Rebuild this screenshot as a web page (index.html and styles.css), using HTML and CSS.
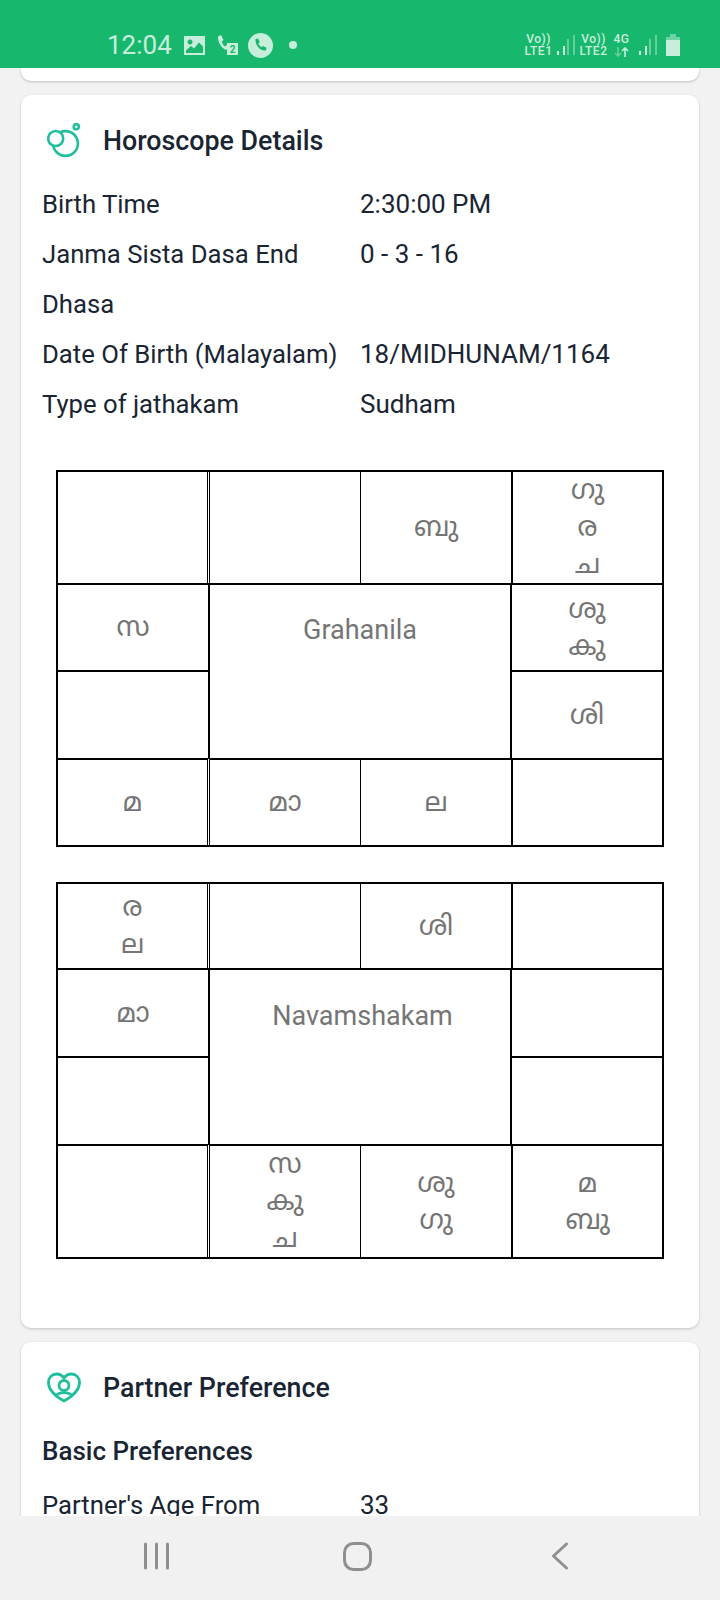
FILE: index.html
```html
<!DOCTYPE html>
<html lang="en">

<head>
    <meta charset="UTF-8">
    <meta name="viewport" content="width=device-width, initial-scale=1.0">
    <title>Horoscope Details</title>
    <link rel="stylesheet" href="styles.css">
</head>

<body>
    <div class="status-bar">
        <div class="status-left">
            <span class="clock">12:04</span>
            <svg class="icon-gallery" width="21" height="19" viewBox="0 0 21 19"><path fill="#c6eeda" fill-rule="evenodd" d="M0 0h21v19H0zM6 3.500a2.500 2.500 0 1 0 .01 0zM2 17h17v-6.500l-4-4-5 6-3-2.500-5 4.500z"/></svg>
            <svg class="icon-call" width="21" height="20" viewBox="0 0 21 20"><path fill="#c6eeda" d="M1 1.500 4 0l2.500 5-1.700 1.500c.5 2 1.700 4 3.200 5l2-1.500 1 3-2 2C4 13 .8 7 1 1.500z"/><rect x="10" y="8" width="11" height="12" fill="#c6eeda"/><text class="badge-num" x="15.500" y="18" text-anchor="middle">2</text></svg>
            <svg class="icon-whatsapp" width="25" height="25" viewBox="0 0 25 25"><circle cx="12.500" cy="12.500" r="12.500" fill="#c6eeda"/><path fill="#18b76e" d="M7.500 6 10 5.500l1.800 3.800-1.500 1.300c.6 1.500 1.800 2.800 3.300 3.700l1.400-1.400 3.500 1.900-.7 2.700C12 18.200 7.200 12.500 7.500 6z"/></svg>
            <span class="dot"></span>
        </div>
        <div class="status-right">
            <div class="net net-one"><span>Vo))</span><span>LTE1</span></div>
            <svg class="signal-one" width="18" height="20" viewBox="0 0 18 20"><path fill="#c6eeda" d="M0 16h2v4H0zM6 11h2v9H6z"/><path fill="#c6eeda" opacity=".45" d="M10 4h2v16h-2zM16 0h2v20h-2z"/></svg>
            <div class="net net-two"><span>Vo))</span><span>LTE2</span></div>
            <div class="net net-4g">
                <span>4G</span>
                <svg width="15" height="10" viewBox="0 0 15 10" fill="none" stroke="#c6eeda" stroke-width="1.600"><path opacity=".45" d="M4 0v9M1 6l3 3 3-3"/><path d="M11 10V1M8 4l3-3 3 3"/></svg>
            </div>
            <svg class="signal-two" width="18" height="20" viewBox="0 0 18 20"><path fill="#c6eeda" d="M0 16h2v4H0zM6 11h2v9H6z"/><path fill="#c6eeda" opacity=".45" d="M10 4h2v16h-2zM16 0h2v20h-2z"/></svg>
            <svg class="battery" width="14" height="22" viewBox="0 0 14 22"><path fill="#c6eeda" opacity=".5" d="M4 0h6v3h4v5H0V3h4z"/><path fill="#c6eeda" d="M0 6h14v16H0z"/></svg>
        </div>
    </div>

    <div class="content">
        <div class="card card-prev"></div>

        <div class="card card-horoscope">
            <div class="card-title">
                <svg class="title-icon" width="34" height="36" viewBox="0 0 34 36" fill="none" stroke="#20bf9c" stroke-width="2.600">
                    <circle cx="18.500" cy="20.500" r="12.400"/>
                    <circle cx="8.700" cy="15.500" r="7.500" fill="#fff"/>
                    <circle cx="29.300" cy="3.700" r="2.600"/>
                </svg>
                <h2>Horoscope Details</h2>
            </div>
            <div class="detail-row"><span class="detail-label">Birth Time</span><span class="detail-value">2:30:00 PM</span></div>
            <div class="detail-row"><span class="detail-label">Janma Sista Dasa End</span><span class="detail-value">0 - 3 - 16</span></div>
            <div class="detail-row"><span class="detail-label">Dhasa</span></div>
            <div class="detail-row"><span class="detail-label">Date Of Birth (Malayalam)</span><span class="detail-value">18/MIDHUNAM/1164</span></div>
            <div class="detail-row"><span class="detail-label">Type of jathakam</span><span class="detail-value">Sudham</span></div>

            <table class="chart chart-first">
                <tr class="row-a">
                    <td class="c1"></td>
                    <td class="c2"></td>
                    <td class="c3">ബു</td>
                    <td class="c4">ഗു<br>ര<br>ച</td>
                </tr>
                <tr class="row-b">
                    <td class="mid-left">സ</td>
                    <td class="center" colspan="2" rowspan="2"><div class="center-label">Grahanila</div></td>
                    <td>ശു<br>കു</td>
                </tr>
                <tr class="row-c">
                    <td class="mid-left"></td>
                    <td>ശി</td>
                </tr>
                <tr class="row-b">
                    <td class="c1">മ</td>
                    <td class="c2">മാ</td>
                    <td class="c3">ല</td>
                    <td class="c4"></td>
                </tr>
            </table>

            <table class="chart">
                <tr class="row-d">
                    <td class="c1">ര<br>ല</td>
                    <td class="c2"></td>
                    <td class="c3">ശി</td>
                    <td class="c4"></td>
                </tr>
                <tr class="row-c">
                    <td class="mid-left">മാ</td>
                    <td class="center" colspan="2" rowspan="2"><div class="center-label center-label-wide">Navamshakam</div></td>
                    <td></td>
                </tr>
                <tr class="row-c">
                    <td class="mid-left"></td>
                    <td></td>
                </tr>
                <tr class="row-e">
                    <td class="c1"></td>
                    <td class="c2">സ<br>കു<br>ച</td>
                    <td class="c3">ശു<br>ഗു</td>
                    <td class="c4">മ<br>ബു</td>
                </tr>
            </table>
        </div>

        <div class="card card-partner">
            <div class="card-title">
                <svg class="title-icon" width="34" height="36" viewBox="0 0 34 36" fill="none" stroke="#20bf9c" stroke-width="2.800">
                    <path d="M17 31C7 25.500 1.500 20 1.500 12.500 1.500 7.500 5 4 9.500 4c3 0 5.800 1.500 7.500 4 1.700-2.500 4.500-4 7.500-4C29 4 32.500 7.500 32.500 12.500 32.500 20 27 25.500 17 31z"/>
                    <circle cx="17" cy="15.500" r="5"/>
                    <path d="M8 26.500c2.500-2.800 5.500-3.800 9-3.800s6.500 1 9 3.800"/>
                </svg>
                <h2>Partner Preference</h2>
            </div>
            <h3>Basic Preferences</h3>
            <div class="detail-row"><span class="detail-label">Partner's Age From</span><span class="detail-value">33</span></div>
        </div>
    </div>

    <div class="nav-bar">
        <svg class="nav-recent" width="25" height="28" viewBox="0 0 25 28" fill="none" stroke="#8f8f8f" stroke-width="3" stroke-linecap="round"><path d="M1.500 2v24M12.500 2v24M23.500 2v24"/></svg>
        <svg class="nav-home" width="29" height="29" viewBox="0 0 29 29" fill="none" stroke="#8f8f8f" stroke-width="3"><rect x="1.500" y="1.500" width="26" height="26" rx="9"/></svg>
        <svg class="nav-back" width="16" height="28" viewBox="0 0 16 28" fill="none" stroke="#8f8f8f" stroke-width="3" stroke-linecap="round" stroke-linejoin="round"><path d="M14.500 2 1.500 14l13 12"/></svg>
    </div>
</body>

</html>
```

FILE: styles.css
```css
/* Page */
html,
body {
    margin: 0;
    padding: 0;
}

body {
    width: 720px;
    height: 1600px;
    overflow: hidden;
    display: flex;
    flex-direction: column;
    background-color: #f2f2f2;
    font-family: Roboto, "Noto Sans", "Noto Sans Malayalam", sans-serif;
    color: #1a2533;
}

/* Status bar */
.status-bar {
    height: 68px;
    flex: none;
    box-sizing: border-box;
    padding: 22px 40px 0 107px;
    display: flex;
    justify-content: space-between;
    align-items: center;
    background-color: #18b76e;
    color: #c6eeda;
}

.status-left,
.status-right {
    display: flex;
    align-items: center;
}

.clock {
    font-size: 26px;
    margin-right: 12px;
}

.icon-call {
    margin-left: 12px;
}

.badge-num {
    font-size: 10px;
    font-weight: 700;
    fill: #18b76e;
}

.icon-whatsapp {
    margin-left: 10px;
}

.dot {
    width: 8px;
    height: 8px;
    margin-left: 16px;
    border-radius: 50%;
    background-color: #c6eeda;
}

.net {
    display: flex;
    flex-direction: column;
    align-items: center;
    font-size: 12px;
    font-weight: 500;
    line-height: 12px;
    letter-spacing: 0.5px;
}

.net-one,
.net-two {
    width: 27px;
}

.signal-one,
.net-two {
    margin-left: 5px;
}

.net-4g {
    width: 15px;
    gap: 2px;
    margin-left: 7px;
}

.signal-two {
    margin-left: 10px;
}

.battery {
    margin-left: 9px;
}

/* Cards */
.content {
    flex: 1;
    overflow: hidden;
    min-height: 0;
}

.card {
    margin: 0 21px 14px;
    background-color: #fff;
    border-radius: 10px;
    box-shadow: 0 1px 3px rgba(0, 0, 0, 0.2);
}

.card-prev {
    height: 13px;
    border-radius: 0 0 10px 10px;
}

.card-horoscope {
    height: 1233px;
    box-sizing: border-box;
    padding: 24px 21px 0;
}

.card-partner {
    padding: 24px 21px 0;
}

.card-title {
    display: flex;
    align-items: center;
    gap: 22px;
    margin: 0 0 16px 5px;
}

.title-icon {
    flex: none;
}

h2 {
    margin: 0;
    font-size: 26.800px;
    font-weight: 500;
    line-height: 44px;
}

h3 {
    margin: 0 0 7px;
    padding-top: 3px;
    font-size: 26px;
    font-weight: 500;
    line-height: 44px;
}

.detail-row {
    display: flex;
    font-size: 25.700px;
    line-height: 50px;
    min-height: 50px;
}

.detail-label {
    width: 318px;
    flex: none;
    white-space: nowrap;
}

.detail-value {
    font-size: 26px;
}

/* Charts */
.chart {
    margin: 0 0 35px 14px;
    width: 608px;
    border-collapse: separate;
    border-spacing: 0;
    table-layout: fixed;
    border: 2px solid #000;
    color: #757575;
    font-size: 27px;
    line-height: 37px;
    text-align: center;
}

.chart-first {
    margin-top: 41px;
}

.chart td {
    padding: 0;
    box-sizing: border-box;
    vertical-align: middle;
}

.row-a td {
    height: 111px;
}

.row-b td {
    height: 87px;
}

.row-c td {
    height: 88px;
}

.row-d td {
    height: 84px;
}

.row-e td {
    height: 113px;
}

.chart tr + tr td {
    border-top: 2px solid #000;
}

/* column widths are set by the cells of the first row */
.c1 {
    width: 152px;
    border-right: 3px double #000;
}

.c2 {
    width: 151px;
    border-right: 1px solid #000;
}

.c3 {
    width: 151px;
    border-right: 1px solid #000;
}

.c4 {
    width: 150px;
    border-left: 1px solid #000;
}

.mid-left {
    border-right: 2px solid #000;
}

.center {
    border-right: 2px solid #000;
}

.chart td.center {
    vertical-align: top;
}

.center-label {
    padding-top: 27px;
}

.center-label-wide {
    padding: 28px 0 0 5px;
}

/* Bottom navigation */
.nav-bar {
    height: 84px;
    flex: none;
    box-sizing: border-box;
    display: flex;
    align-items: center;
    padding: 0 0 4px 144px;
    background-color: #f1f1f1;
}

.nav-home {
    margin-left: 174px;
}

.nav-back {
    margin-left: 180px;
}
```
